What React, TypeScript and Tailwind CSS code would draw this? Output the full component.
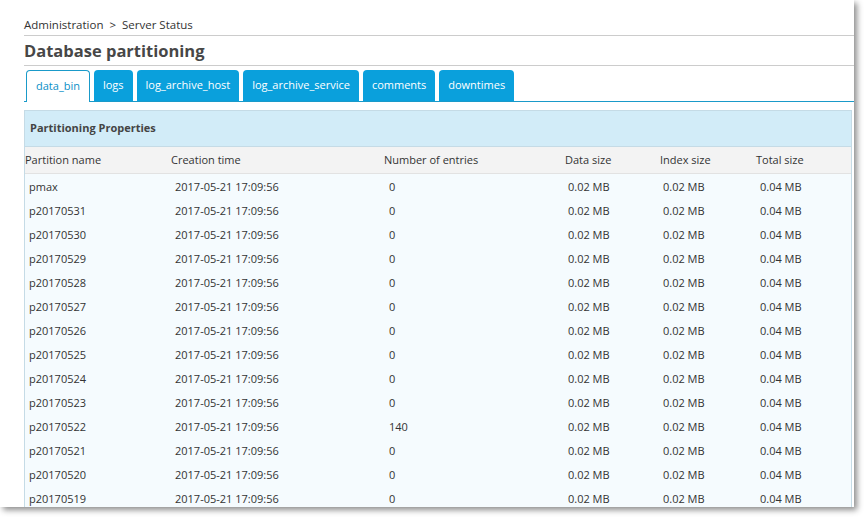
import React from 'react';

const tabs = ['data_bin', 'logs', 'log_archive_host', 'log_archive_service', 'comments', 'downtimes'];

const partitions = [
  'pmax',
  'p20170531',
  'p20170530',
  'p20170529',
  'p20170528',
  'p20170527',
  'p20170526',
  'p20170525',
  'p20170524',
  'p20170523',
  'p20170522',
  'p20170521',
  'p20170520',
  'p20170519',
];

const cols = 'grid grid-cols-[146px_213px_181px_95px_96px_1fr]';

export default function App() {
  return (
    <div className="w-[864px] h-[517px] bg-white overflow-hidden" style={{ fontFamily: '"Open Sans", "Liberation Sans", sans-serif' }}>
      <div className="w-[854px] h-[507px] bg-white overflow-hidden shadow-[3px_3px_6px_rgba(0,0,0,0.45)] pl-6 text-[#333]">
        {/* Breadcrumb */}
        <div className="h-[36px] pt-[17px] text-[11.5px] leading-[16px] border-b border-[#cccccc]">
          Administration &nbsp;&gt;&nbsp; Server Status
        </div>
        <div className="h-[30px] text-[16.5px] leading-[30px] font-bold text-[#474747] border-b border-[#cccccc]">
          Database partitioning
        </div>

        {/* Tabs */}
        <div className="flex items-end gap-1 mt-[3px] pl-[2px] h-[33px] border-b border-[#1a9ac9]">
          {tabs.map((t, i) =>
            i === 0 ? (
              <div
                key={t}
                className="h-[32px] px-[9px] -mb-px flex items-center bg-white text-[#0a8fc7] text-[11px] border border-b-0 border-[#1a9ac9] rounded-t-[4px]"
              >
                {t}
              </div>
            ) : (
              <div
                key={t}
                className="h-[31px] px-[9px] flex items-center bg-[#0aa0dc] text-white text-[11px] font-medium rounded-t-[4px]"
              >
                {t}
              </div>
            )
          )}
        </div>

        {/* Table */}
        <div className="mt-[8px] mr-[2px] border border-[#c5dbe6] border-b-0">
          <div className="h-[36px] flex items-center pl-[5px] bg-[#d2ecf8] text-[11px] font-bold text-[#444] border-b border-[#c5dbe6]">
            Partitioning Properties
          </div>
          <div className={`${cols} h-[27px] items-center bg-[#f3f3f3] text-[11px] text-[#333] border-b border-[#e2e2e2]`}>
            <div>Partition name</div>
            <div>Creation time</div>
            <div>Number of entries</div>
            <div>Data size</div>
            <div>Index size</div>
            <div>Total size</div>
          </div>
          <div className="bg-[#f5fbfe] pt-[1px]">
            {partitions.map((p) => (
              <div key={p} className={`${cols} h-[24px] items-center text-[11px] text-[#333]`}>
                <div className="pl-[4px]">{p}</div>
                <div className="pl-[4px]">2017-05-21 17:09:56</div>
                <div className="pl-[5px]">{p === 'p20170522' ? '140' : '0'}</div>
                <div className="pl-[3px]">0.02 MB</div>
                <div className="pl-[3px]">0.02 MB</div>
                <div className="pl-[4px]">0.04 MB</div>
              </div>
            ))}
          </div>
        </div>
      </div>
    </div>
  );
}
